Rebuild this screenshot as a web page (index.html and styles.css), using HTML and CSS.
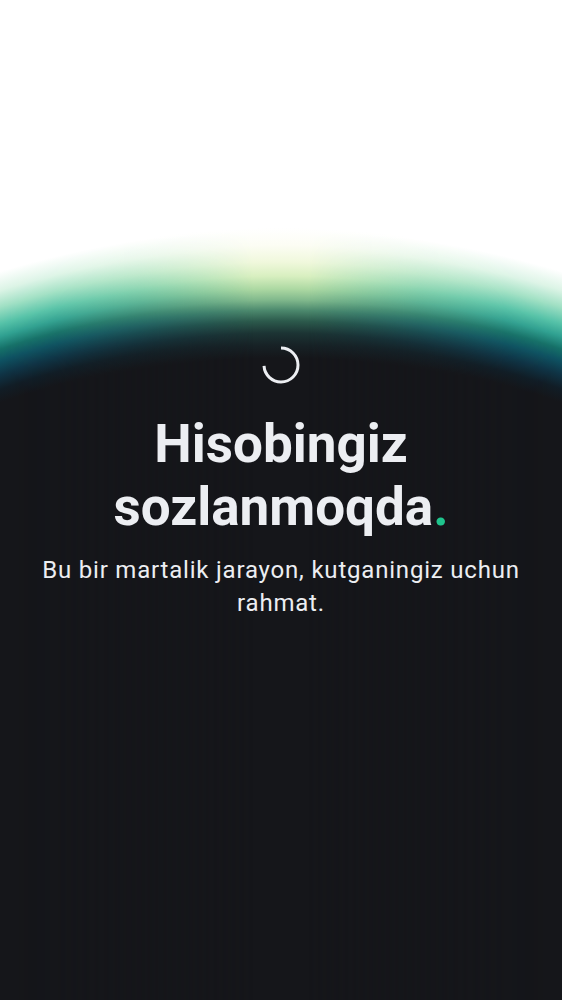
FILE: index.html
```html
<!DOCTYPE html>
<html lang="uz">
<head>
<meta charset="utf-8">
<title>Hisobingiz sozlanmoqda</title>
<link rel="stylesheet" href="styles.css">
</head>
<body>
<div class="page">
  <main class="content">
    <svg class="spinner" width="40" height="40" viewBox="0 0 40 40" aria-hidden="true">
      <circle cx="20" cy="20" r="17" fill="none" stroke="#eceef2" stroke-width="3" stroke-dasharray="78.6 106.8" transform="rotate(-90 20 20)"/>
    </svg>
    <h1 class="title">Hisobingiz sozlanmoqda<span class="dot">.</span></h1>
    <p class="subtitle">Bu bir martalik jarayon, kutganingiz uchun rahmat.</p>
  </main>
</div>
</body>
</html>
```
FILE: styles.css
```css
html, body {
  margin: 0;
  padding: 0;
}

body {
  background: #15161a;
  font-family: Roboto, "Noto Sans", "Liberation Sans", sans-serif;
}

.page {
  position: relative;
  width: 562px;
  height: 1000px;
  overflow: hidden;
  background: radial-gradient(circle 1400px at 50% 1200px,
    #15161a 0,
    #15161a 842px,
    #172226 855px,
    #1c3434 867px,
    #2c5a4c 879px,
    #4d8a6e 890px,
    #80b88c 900px,
    #acd8a2 911px,
    #d8efc0 924px,
    #f0f8dc 938px,
    #fcfdf4 955px,
    #ffffff 972px);
}

.page::before {
  content: "";
  position: absolute;
  inset: 0;
  background: radial-gradient(circle 1400px at 50% 1200px,
    #15161a 0,
    #15161a 845px,
    #111d26 858px,
    #0f3446 872px,
    #0e5262 885px,
    #157068 896px,
    #2fa091 908px,
    #55c2a8 920px,
    #a0e0c4 936px,
    #dcf4e6 952px,
    #ffffff 970px);
  -webkit-mask-image: linear-gradient(90deg, #000 0, rgba(0,0,0,0.95) 10%, rgba(0,0,0,0.6) 25%, rgba(0,0,0,0) 45%, rgba(0,0,0,0) 55%, rgba(0,0,0,0.6) 75%, rgba(0,0,0,0.95) 90%, #000 100%);
  mask-image: linear-gradient(90deg, #000 0, rgba(0,0,0,0.95) 10%, rgba(0,0,0,0.6) 25%, rgba(0,0,0,0) 45%, rgba(0,0,0,0) 55%, rgba(0,0,0,0.6) 75%, rgba(0,0,0,0.95) 90%, #000 100%);
}

.content {
  position: relative;
  z-index: 1;
  display: flex;
  flex-direction: column;
  align-items: center;
  padding: 345px 24px 0;
  text-align: center;
}

.spinner {
  display: block;
}

.title {
  margin: 28px 0 0;
  font-size: 53px;
  line-height: 63px;
  font-weight: 700;
  color: #eceef2;
  max-width: 360px;
}

.dot {
  color: #1fc48d;
}

.subtitle {
  margin: 15px 0 0;
  font-size: 24px;
  line-height: 33px;
  font-weight: 400;
  letter-spacing: 0.8px;
  color: #eceef2;
}
```
